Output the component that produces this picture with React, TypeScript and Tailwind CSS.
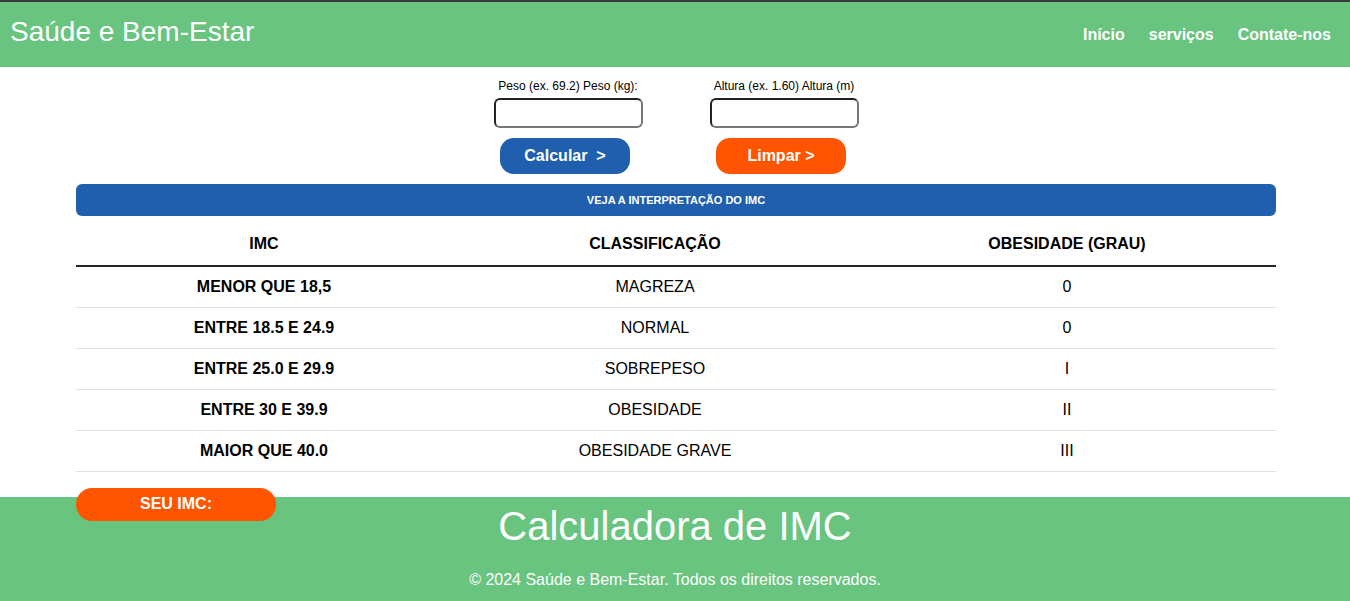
import React from 'react';

const rows = [
  { imc: 'MENOR QUE 18,5', cls: 'MAGREZA', grau: '0' },
  { imc: 'ENTRE 18.5 E 24.9', cls: 'NORMAL', grau: '0' },
  { imc: 'ENTRE 25.0 E 29.9', cls: 'SOBREPESO', grau: 'I' },
  { imc: 'ENTRE 30 E 39.9', cls: 'OBESIDADE', grau: 'II' },
  { imc: 'MAIOR QUE 40.0', cls: 'OBESIDADE GRAVE', grau: 'III' },
];

const App: React.FC = () => {
  return (
    <div className="min-h-[601px] bg-white text-black font-['Liberation_Sans',Arial,sans-serif]">
      <header className="h-[67px] bg-[#68c47f] border-t-2 border-[#343a40] flex items-center justify-between pl-[10px] pr-[19px]">
        <h1 className="text-[28px] leading-none text-white -mt-[5px]">Saúde e Bem-Estar</h1>
        <nav className="flex gap-[24px] text-white font-bold text-[16px]">
          <a href="#">Início</a>
          <a href="#">serviços</a>
          <a href="#">Contate-nos</a>
        </nav>
      </header>

      <main className="w-[1200px] ml-[76px]">
        <div className="flex justify-center gap-[16px] pt-[12px]">
          <div className="w-[200px] flex flex-col items-center">
            <label className="text-[12px] leading-[14px] mb-[5px]">Peso (ex. 69.2) Peso (kg):</label>
            <input className="w-[149px] h-[30px] rounded-[6px] border-2 border-t-[#222] border-l-[#222] border-b-[#767676] border-r-[#767676]" />
            <button className="mt-[10px] mr-[6px] w-[130px] h-[36px] rounded-[14px] bg-[#1f5fad] text-white font-bold text-[16px]">Calcular &nbsp;&gt;</button>
          </div>
          <div className="w-[200px] flex flex-col items-center">
            <label className="text-[12px] leading-[14px] mb-[5px]">Altura (ex. 1.60) Altura (m)</label>
            <input className="w-[149px] h-[30px] rounded-[6px] border-2 border-t-[#222] border-l-[#222] border-b-[#767676] border-r-[#767676]" />
            <button className="mt-[10px] mr-[6px] w-[130px] h-[36px] rounded-[14px] bg-[#ff5500] text-white font-bold text-[16px]">Limpar &gt;</button>
          </div>
        </div>

        <div className="mt-[10px] h-[32px] rounded-[6px] bg-[#1f5fad] flex items-center justify-center text-white font-bold text-[11px]">
          VEJA A INTERPRETAÇÃO DO IMC
        </div>

        <table className="w-full border-collapse text-[16px]">
          <thead>
            <tr className="h-[50px] border-b-2 border-[#212529] font-bold">
              <th className="w-[376px] pt-[6px]">IMC</th>
              <th className="w-[406px] pt-[6px]">CLASSIFICAÇÃO</th>
              <th className="w-[418px] pt-[6px]">OBESIDADE (GRAU)</th>
            </tr>
          </thead>
          <tbody>
            {rows.map((r) => (
              <tr key={r.imc} className="h-[41px] border-b border-[#dee2e6] text-center">
                <td className="font-bold">{r.imc}</td>
                <td>{r.cls}</td>
                <td>{r.grau}</td>
              </tr>
            ))}
          </tbody>
        </table>

        <div className="relative z-10 mt-[16px] w-[200px] h-[33px] rounded-[16px] bg-[#ff5500] flex items-center justify-center text-white font-bold text-[16px]">
          SEU IMC:
        </div>
      </main>

      <footer className="-mt-[24px] h-[104px] bg-[#68c47f] text-white flex flex-col items-center">
        <h2 className="text-[40px] leading-none mt-[9px]">Calculadora de IMC</h2>
        <p className="text-[16px] mt-[22px]">© 2024 Saúde e Bem-Estar. Todos os direitos reservados.</p>
      </footer>
    </div>
  );
};

export default App;
